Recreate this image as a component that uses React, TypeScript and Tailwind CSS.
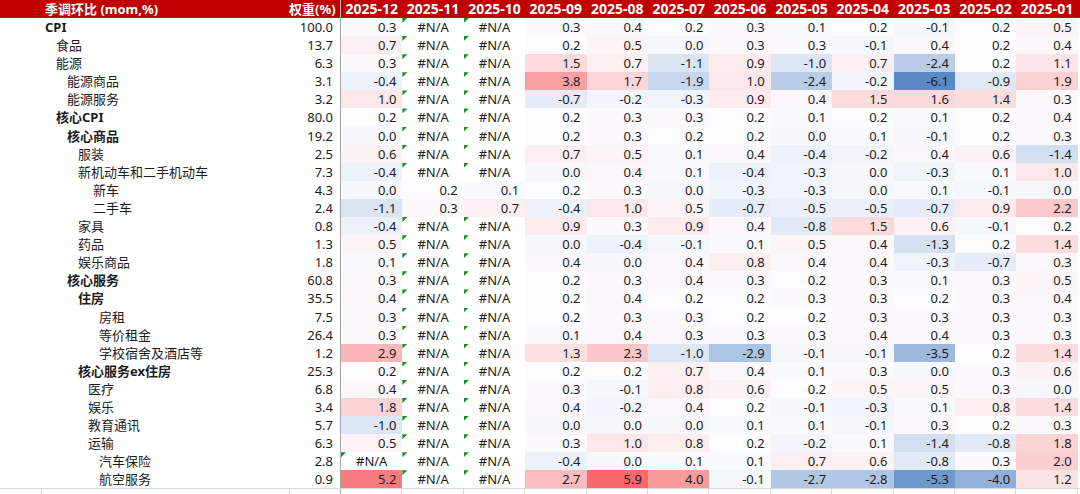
import React from "react";

type Row = { label: string; pad: string; bold?: boolean; w: string; v: (number | null)[] };
const N = null;

const rows: Row[] = [
  { label: "CPI", pad: "pl-[45px]", bold: true, w: "100.0", v: [0.3, N, N, 0.3, 0.4, 0.2, 0.3, 0.1, 0.2, -0.1, 0.2, 0.5] },
  { label: "食品", pad: "pl-[56px]", w: "13.7", v: [0.7, N, N, 0.2, 0.5, 0.0, 0.3, 0.3, -0.1, 0.4, 0.2, 0.4] },
  { label: "能源", pad: "pl-[56px]", w: "6.3", v: [0.3, N, N, 1.5, 0.7, -1.1, 0.9, -1.0, 0.7, -2.4, 0.2, 1.1] },
  { label: "能源商品", pad: "pl-[67px]", w: "3.1", v: [-0.4, N, N, 3.8, 1.7, -1.9, 1.0, -2.4, -0.2, -6.1, -0.9, 1.9] },
  { label: "能源服务", pad: "pl-[67px]", w: "3.2", v: [1.0, N, N, -0.7, -0.2, -0.3, 0.9, 0.4, 1.5, 1.6, 1.4, 0.3] },
  { label: "核心CPI", pad: "pl-[56px]", bold: true, w: "80.0", v: [0.2, N, N, 0.2, 0.3, 0.3, 0.2, 0.1, 0.2, 0.1, 0.2, 0.4] },
  { label: "核心商品", pad: "pl-[67px]", bold: true, w: "19.2", v: [0.0, N, N, 0.2, 0.3, 0.2, 0.2, 0.0, 0.1, -0.1, 0.2, 0.3] },
  { label: "服装", pad: "pl-[78px]", w: "2.5", v: [0.6, N, N, 0.7, 0.5, 0.1, 0.4, -0.4, -0.2, 0.4, 0.6, -1.4] },
  { label: "新机动车和二手机动车", pad: "pl-[78px]", w: "7.3", v: [-0.4, N, N, 0.0, 0.4, 0.1, -0.4, -0.3, 0.0, -0.3, 0.1, 1.0] },
  { label: "新车", pad: "pl-[93px]", w: "4.3", v: [0.0, 0.2, 0.1, 0.2, 0.3, 0.0, -0.3, -0.3, 0.0, 0.1, -0.1, 0.0] },
  { label: "二手车", pad: "pl-[93px]", w: "2.4", v: [-1.1, 0.3, 0.7, -0.4, 1.0, 0.5, -0.7, -0.5, -0.5, -0.7, 0.9, 2.2] },
  { label: "家具", pad: "pl-[78px]", w: "0.8", v: [-0.4, N, N, 0.9, 0.3, 0.9, 0.4, -0.8, 1.5, 0.6, -0.1, 0.2] },
  { label: "药品", pad: "pl-[78px]", w: "1.3", v: [0.5, N, N, 0.0, -0.4, -0.1, 0.1, 0.5, 0.4, -1.3, 0.2, 1.4] },
  { label: "娱乐商品", pad: "pl-[78px]", w: "1.8", v: [0.1, N, N, 0.4, 0.0, 0.4, 0.8, 0.4, 0.4, -0.3, -0.7, 0.3] },
  { label: "核心服务", pad: "pl-[67px]", bold: true, w: "60.8", v: [0.3, N, N, 0.2, 0.3, 0.4, 0.3, 0.2, 0.3, 0.1, 0.3, 0.5] },
  { label: "住房", pad: "pl-[78px]", bold: true, w: "35.5", v: [0.4, N, N, 0.2, 0.4, 0.2, 0.2, 0.3, 0.3, 0.2, 0.3, 0.4] },
  { label: "房租", pad: "pl-[99px]", w: "7.5", v: [0.3, N, N, 0.2, 0.3, 0.3, 0.2, 0.2, 0.3, 0.3, 0.3, 0.3] },
  { label: "等价租金", pad: "pl-[99px]", w: "26.4", v: [0.3, N, N, 0.1, 0.4, 0.3, 0.3, 0.3, 0.4, 0.4, 0.3, 0.3] },
  { label: "学校宿舍及酒店等", pad: "pl-[99px]", w: "1.2", v: [2.9, N, N, 1.3, 2.3, -1.0, -2.9, -0.1, -0.1, -3.5, 0.2, 1.4] },
  { label: "核心服务ex住房", pad: "pl-[78px]", bold: true, w: "25.3", v: [0.2, N, N, 0.2, 0.2, 0.7, 0.4, 0.1, 0.3, 0.0, 0.3, 0.6] },
  { label: "医疗", pad: "pl-[88px]", w: "6.8", v: [0.4, N, N, 0.3, -0.1, 0.8, 0.6, 0.2, 0.5, 0.5, 0.3, 0.0] },
  { label: "娱乐", pad: "pl-[88px]", w: "3.4", v: [1.8, N, N, 0.4, -0.2, 0.4, 0.2, -0.1, -0.3, 0.1, 0.8, 1.4] },
  { label: "教育通讯", pad: "pl-[88px]", w: "5.7", v: [-1.0, N, N, 0.0, 0.0, 0.0, 0.1, 0.1, -0.1, 0.3, 0.2, 0.3] },
  { label: "运输", pad: "pl-[88px]", w: "6.3", v: [0.5, N, N, 0.3, 1.0, 0.8, 0.2, -0.2, 0.1, -1.4, -0.8, 1.8] },
  { label: "汽车保险", pad: "pl-[99px]", w: "2.8", v: [N, N, N, -0.4, 0.0, 0.1, 0.1, 0.7, 0.6, -0.8, 0.3, 2.0] },
  { label: "航空服务", pad: "pl-[99px]", w: "0.9", v: [5.2, N, N, 2.7, 5.9, 4.0, -0.1, -2.7, -2.8, -5.3, -4.0, 1.2] },
];

const months = [
  "2025-12", "2025-11", "2025-10", "2025-09", "2025-08", "2025-07",
  "2025-06", "2025-05", "2025-04", "2025-03", "2025-02", "2025-01",
];

const MIN = -6.1;
const MAX = 5.9;
const MID = 0.2;

function heat(v: number): string {
  const w = [252, 252, 255];
  const r = [248, 105, 107];
  const b = [90, 138, 198];
  let t: number;
  let c: number[];
  if (v >= MID) {
    t = (v - MID) / (MAX - MID);
    c = r;
  } else {
    t = (MID - v) / (MID - MIN);
    c = b;
  }
  t = Math.max(0, Math.min(1, t));
  const rgb = w.map((x, i) => Math.round(x + (c[i] - x) * t));
  return `rgb(${rgb.join(",")})`;
}

const grid = "grid grid-cols-[290px_51px_repeat(12,61.4px)]";

export default function App() {
  return (
    <div className="w-[1080px] h-[494px] overflow-hidden bg-white text-[#1c1c1c] font-['Noto_Sans','Noto_Sans_CJK_SC',sans-serif]">
      {/* header */}
      <div className={`${grid} h-[18px] bg-[#c00000] text-white font-bold leading-[18px] whitespace-nowrap`}>
        <div className="pl-[45px] text-[13px]">季调环比 (mom,%)</div>
        <div className="text-right pr-[6px] text-[13px] border-r border-[#b9b9b9] overflow-visible">
          <span className="relative left-[-1px]">权重(%)</span>
        </div>
        {months.map((m) => (
          <div key={m} className="text-center text-[14px]">
            {m}
          </div>
        ))}
      </div>

      {rows.map((row, ri) => (
        <div key={ri} className={`${grid} h-[18.1px] leading-[18px] text-[13px] whitespace-nowrap`}>
          <div className={`${row.pad} ${row.bold ? "font-bold" : ""}`}>{row.label}</div>
          <div className="text-right pr-[7px] border-r border-[#a6a6a6]">{row.w}</div>
          {row.v.map((v, ci) =>
            v === null ? (
              <div key={ci} className="relative text-center bg-white">
                <span className="absolute left-0 top-0 w-[5px] h-[5px] bg-[#12951a] [clip-path:polygon(0_0,100%_0,0_100%)]" />
                #N/A
              </div>
            ) : (
              <div key={ci} className="text-right pr-[6px]" style={{ backgroundColor: heat(v) }}>
                {v.toFixed(1)}
              </div>
            )
          )}
        </div>
      ))}

      {/* empty spreadsheet row below */}
      <div className="grid grid-cols-[42px_248px_51px_repeat(12,61.4px)] h-[8px] border-t border-[#d9d9d9]">
        <div className="border-r border-[#d9d9d9]" />
        <div className="border-r border-[#d9d9d9]" />
        <div className="border-r border-[#a6a6a6]" />
        {months.map((m) => (
          <div key={m} className="border-r border-[#d9d9d9]" />
        ))}
      </div>
    </div>
  );
}
